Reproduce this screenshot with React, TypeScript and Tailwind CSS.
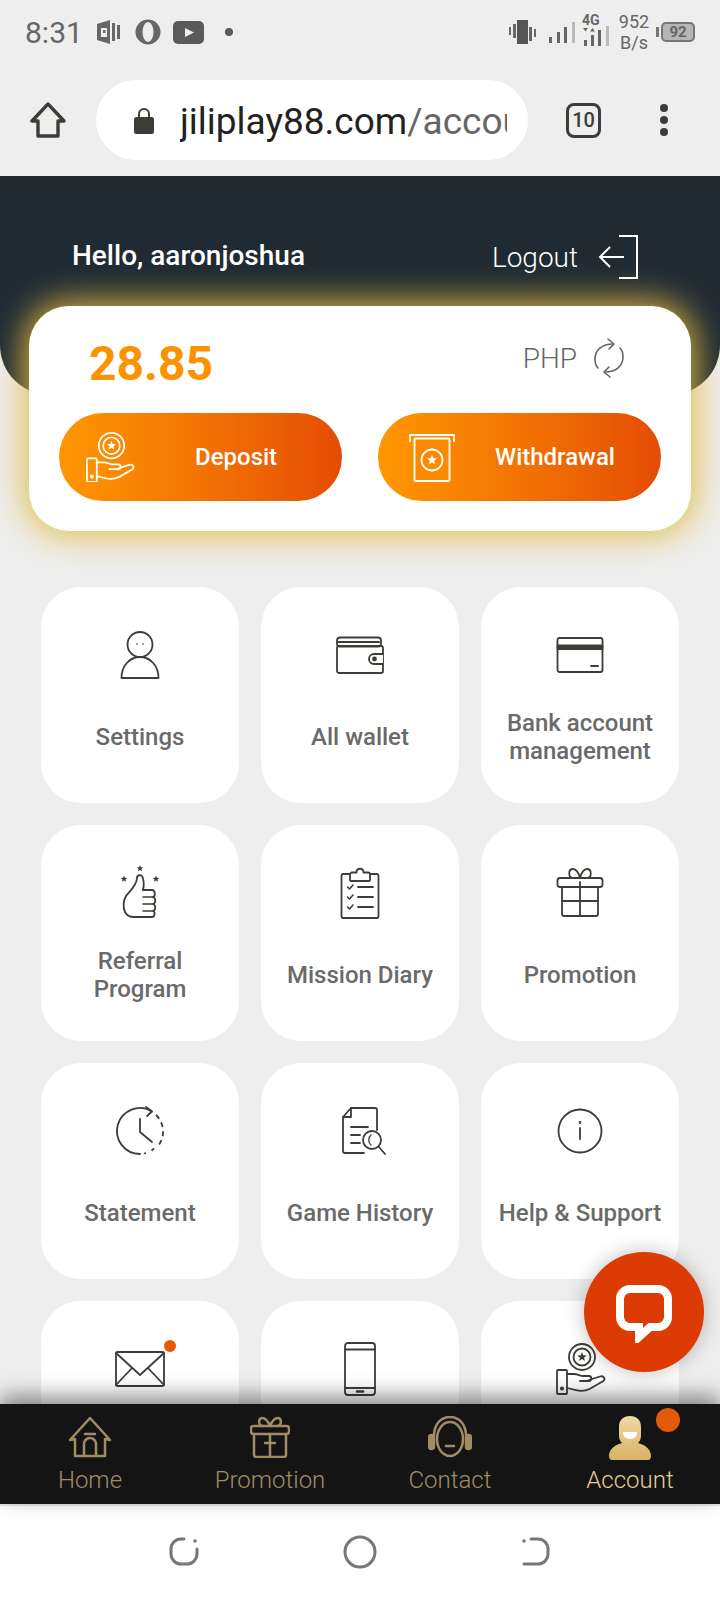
import type { ReactNode } from "react";

function Svg({ children, w = 60, h = 60, sw = 1.8 }: { children: ReactNode; w?: number; h?: number; sw?: number }) {
  return (
    <svg width={w} height={h} viewBox={`0 0 ${w} ${h}`} fill="none" stroke="currentColor" strokeWidth={sw} strokeLinecap="round" strokeLinejoin="round">
      {children}
    </svg>
  );
}

const starPath = (cx: number, cy: number, r: number) => {
  const pts: string[] = [];
  for (let i = 0; i < 10; i++) {
    const rad = i % 2 === 0 ? r : r * 0.42;
    const a = (Math.PI / 5) * i - Math.PI / 2;
    pts.push(`${(cx + rad * Math.cos(a)).toFixed(2)},${(cy + rad * Math.sin(a)).toFixed(2)}`);
  }
  return `M${pts.join("L")}Z`;
};

function HandCoin({ size = 50 }: { size?: number }) {
  return (
    <svg width={size} height={size * 1.04} viewBox="0 0 50 52" fill="none" stroke="currentColor" strokeWidth="1.8" strokeLinecap="round" strokeLinejoin="round">
      <circle cx="26" cy="14" r="13" />
      <circle cx="26" cy="14" r="8.5" />
      <path d={starPath(26, 14, 5)} fill="currentColor" stroke="none" />
      <rect x="1" y="27" width="10" height="24" rx="1" />
      <circle cx="6" cy="45.5" r="1.2" fill="currentColor" />
      <path d="M11 31h7c4 0 6 2 9 2h6c3 0 3 5 0 5h-9" />
      <path d="M33 37l11-3.5c4-1.2 6 2.8 3 4.8l-13 7.5c-5 2.6-9 2.6-14 1.4l-9-2.2" />
    </svg>
  );
}

function WithdrawIcon() {
  return (
    <svg width="46" height="49" viewBox="0 0 46 49" fill="none" stroke="currentColor" strokeWidth="1.8" strokeLinejoin="round">
      <path d="M1 9V2h44v7" />
      <rect x="5.5" y="5.5" width="35" height="42.5" rx="1" fill="#fb8a00" />
      <circle cx="23" cy="27" r="10.5" />
      <path d={starPath(23, 27, 5.5)} fill="currentColor" stroke="none" />
    </svg>
  );
}

const icons: Record<string, ReactNode> = {
  settings: (
    <Svg>
      <ellipse cx="30" cy="17.5" rx="12.5" ry="12.5" />
      <path d="M11.5 51c0-12 8-21 18.500-21s18.500 9 18.500 21z" />
      <circle cx="27" cy="17" r=".2" fill="currentColor" />
      <circle cx="33" cy="17" r=".2" fill="currentColor" />
    </Svg>
  ),
  wallet: (
    <Svg>
      <rect x="7" y="19" width="46" height="27" rx="2" />
      <rect x="7" y="10.500" width="44" height="9" rx="3" />
      <path d="M8 15h41" />
      <path d="M53 27H44a5 5 0 0 0 0 10h9" fill="#fff" />
      <circle cx="44.500" cy="32" r="1.500" fill="currentColor" />
    </Svg>
  ),
  card: (
    <Svg>
      <rect x="7.500" y="11" width="45" height="34" rx="2" />
      <rect x="7.500" y="18.500" width="45" height="3.500" fill="currentColor" />
      <path d="M41 39h7" />
    </Svg>
  ),
  referral: (
    <Svg>
      <path d={starPath(30, 3.500, 3.500)} fill="currentColor" stroke="none" />
      <path d={starPath(14, 14, 3.500)} fill="currentColor" stroke="none" />
      <path d={starPath(46, 14, 3.500)} fill="currentColor" stroke="none" />
      <path d="M23 52h19c3 0 3.500-5 1-6 3-1 3-6 0-7 3-1 3-6 0-7 3-1 2-7-1-7H33c1-4 1-9-.5-13-1.500-3-5.500-2-5.500 1 0 7-7 13-11 18-3 5-3 12-1 16 1.500 3 4 5 9 5z" />
      <path d="M33 25h9M33 32h10M33 39h10M33 46h10" strokeWidth="1.600" />
    </Svg>
  ),
  mission: (
    <Svg>
      <rect x="11.500" y="9" width="37" height="44" rx="2" />
      <path d="M20 15V9.500c0-1 1-2 2-2h4.500c0-5 7-5 7 0H38c1 0 2 1 2 2V15c0 .500-.5 1-1 1H21c-.5 0-1-.5-1-1z" fill="#fff" />
      <path d="M17.500 22l2 2 3.500-4M17.500 32l2 2 3.500-4M17.500 42l2 2 3.500-4" strokeWidth="1.600" />
      <path d="M28 22h15M28 32h15M28 42h15" />
    </Svg>
  ),
  gift: (
    <Svg>
      <rect x="7.500" y="13" width="45" height="9" rx="2.500" />
      <path d="M12 22v27c0 1 1 2 2 2h32c1 0 2-1 2-2V22" />
      <path d="M30 17v34M12 36h36" />
      <path d="M30 13c-1-5-4-9-7-9-5 0-5 9 0 9M30 13c1-5 4-9 7-9 5 0 5 9 0 9" />
    </Svg>
  ),
  statement: (
    <Svg>
      <path d="M42 8.400A23 23 0 1 0 30 51" />
      <path d="M46 12a23 23 0 0 1 2 31M44 45.500l-2.500 2M36 50l-2 .5" strokeDasharray="5 4" strokeLinecap="butt" />
      <path d="M36 4l6 4.500-5 4.500" />
      <path d="M30 16v13l12 10" />
    </Svg>
  ),
  history: (
    <Svg>
      <path d="M34 50H15c-1 0-2-1-2-2V14l8-9h24c1 0 2 1 2 2v20" />
      <path d="M21 5v9h-8" />
      <path d="M21 24h17M21 32h9M21 40h9" />
      <circle cx="42" cy="37" r="9" />
      <path d="M41 32a5 6 0 0 0 0 10" strokeWidth="1.300" />
      <path d="M49 44l6 7" />
    </Svg>
  ),
  help: (
    <Svg>
      <circle cx="30" cy="28" r="21.500" />
      <path d="M30 25v11" />
      <circle cx="30" cy="19.500" r=".5" fill="currentColor" />
    </Svg>
  ),
  mail: (
    <Svg>
      <rect x="6" y="11" width="48" height="34" rx="1.500" />
      <path d="M6 12l24 22 24-22M6 44l16-17M54 44L38 27" />
    </Svg>
  ),
  phone: (
    <Svg>
      <rect x="15" y="2" width="30" height="52" rx="3" />
      <path d="M15 8.500h30M15 47h30" />
      <path d="M27 50.500h6" strokeWidth="2.500" />
    </Svg>
  ),
  coin: (
    <div className="ml-[6px] mt-[2px]">
      <HandCoin size={50} />
    </div>
  ),
};

const tiles: { key: string; label?: string[]; badge?: boolean }[] = [
  { key: "settings", label: ["Settings"] },
  { key: "wallet", label: ["All wallet"] },
  { key: "card", label: ["Bank account", "management"] },
  { key: "referral", label: ["Referral", "Program"] },
  { key: "mission", label: ["Mission Diary"] },
  { key: "gift", label: ["Promotion"] },
  { key: "statement", label: ["Statement"] },
  { key: "history", label: ["Game History"] },
  { key: "help", label: ["Help & Support"] },
  // last row runs under the nav, its labels are not on screen
  { key: "mail", badge: true },
  { key: "phone" },
  { key: "coin" },
];

function Tile({ t }: { t: (typeof tiles)[number] }) {
  return (
    <div className="flex h-[216px] flex-col items-center rounded-[40px] bg-white pt-[40px]">
      <div className="relative h-[60px] w-[60px] text-[#3d3c36]">
        {icons[t.key]}
        {t.badge && <span className="absolute right-[-6px] top-[-1px] h-[12px] w-[12px] rounded-full bg-[#e85a00]" />}
      </div>
      <div className="mt-[22px] flex h-[56px] flex-col items-center justify-center text-center text-[24px] font-medium leading-[28px] text-[#6a6a6a]">
        {t.label?.map((l) => (
          <span key={l}>{l}</span>
        ))}
      </div>
    </div>
  );
}

function NavItem({ label, active, children }: { label: string; active?: boolean; children: ReactNode }) {
  return (
    <div className={`relative flex flex-col items-center pt-[12px] ${active ? "text-[#e6cd96]" : "text-[#a08d63]"}`}>
      <div className="h-[44px]">{children}</div>
      <span className="mt-[2px] text-[24px] font-light leading-[36px]">{label}</span>
    </div>
  );
}

function StatusBar() {
  return (
    <div className="flex h-[70px] items-center pl-[25px] pr-[25px] text-[#666666]">
      <span className="mb-[4px] text-[30px] leading-none">8:31</span>
      <svg className="ml-[14px] mb-[6px]" width="24" height="24" viewBox="0 0 24 24" fill="currentColor">
        <path d="M0 4l13-4v24L0 20z" />
        <rect x="4" y="8" width="6" height="9" fill="#eeeeee" />
        <rect x="6" y="10" width="2.500" height="3" />
        <rect x="15" y="3" width="3" height="18" />
        <rect x="20" y="5" width="3" height="14" />
      </svg>
      <svg className="ml-[14px] mb-[6px]" width="26" height="26" viewBox="0 0 26 26">
        <circle cx="13" cy="13" r="12.500" fill="currentColor" />
        <ellipse cx="13" cy="13" rx="5.500" ry="10" fill="#eeeeee" />
      </svg>
      <svg className="ml-[12px] mb-[6px]" width="31" height="23" viewBox="0 0 31 23">
        <rect width="31" height="23" rx="5" fill="#5a5a5a" />
        <path d="M12 7l9 4.500-9 4.500z" fill="#eeeeee" />
      </svg>
      <span className="ml-[21px] mb-[6px] h-[8px] w-[8px] rounded-full bg-[#5a5a5a]" />

      <div className="ml-auto mb-[6px] flex items-center">
        <svg width="28" height="24" viewBox="0 0 28 24" fill="currentColor">
          <rect x="0" y="7" width="2" height="8" />
          <rect x="4" y="4" width="3" height="14" />
          <rect x="8" y="0" width="11" height="24" fill="#555555" />
          <rect x="20" y="7" width="3" height="14" />
          <rect x="25" y="9" width="2" height="8" />
        </svg>
        <svg className="ml-[12px]" width="30" height="24" viewBox="0 0 30 24" fill="currentColor">
          <rect x="0" y="17" width="3" height="6" />
          <rect x="8" y="12" width="3" height="11" />
          <rect x="15" y="7" width="3" height="16" />
          <rect x="23" y="2" width="3" height="21" fill="#bbbbbb" />
        </svg>
        <div className="relative ml-[3px] h-[34px] w-[30px]">
          <span className="absolute left-0 top-[-3px] text-[14px] font-bold leading-[16px]">4G</span>
          <svg className="absolute left-0 top-[11px]" width="30" height="23" viewBox="0 0 30 23" fill="currentColor">
            <path d="M1 2h5l-2.500 3.500zM8 5.500h5L10.500 2z" />
            <rect x="2" y="14" width="3" height="6" />
            <rect x="9" y="9" width="3" height="11" />
            <rect x="16" y="4" width="3" height="16" />
            <rect x="24" y="-1" width="3" height="21" fill="#bbbbbb" />
          </svg>
        </div>
        <div className="ml-[6px] flex w-[32px] flex-col items-center text-[18px] leading-[21px]">
          <span>952</span>
          <span>B/s</span>
        </div>
        <div className="ml-[6px] flex items-center">
          <span className="h-[10px] w-[3px] bg-[#777777]" />
          <div className="ml-[2px] flex h-[20px] w-[34px] items-center justify-center rounded-[5px] border-2 border-[#777777] bg-[#b5b5b5] text-[15px] font-bold leading-none">
            92
          </div>
        </div>
      </div>
    </div>
  );
}

function UrlBar() {
  return (
    <div className="flex h-[106px] items-center pb-[6px] pl-[30px]">
      <svg width="36" height="36" viewBox="0 0 36 36" fill="none" stroke="#3d3c36" strokeWidth="3.400" strokeLinejoin="round">
        <path d="M18 2L2 19h6v15h20V19h6z" />
      </svg>
      <div className="ml-[30px] flex h-[80px] w-[432px] items-center rounded-[40px] bg-white pl-[38px]">
        <svg width="20" height="27" viewBox="0 0 20 27" fill="#3d3c36">
          <path d="M5 11V7a5 5 0 0 1 10 0v4" fill="none" stroke="#3d3c36" strokeWidth="2" />
          <rect x="0" y="10" width="20" height="17" rx="2.500" />
        </svg>
        <div className="ml-[26px] mt-[4px] w-[327px] overflow-hidden whitespace-nowrap text-[37px] leading-[44px] text-[#222222]">
          jiliplay88.com<span className="text-[#666666]">/account</span>
        </div>
      </div>
      <div className="ml-[38px] flex h-[35px] w-[35px] items-center justify-center rounded-[8px] border-[3.500px] border-[#3d3c36] text-[20px] font-medium leading-none text-[#3d3c36]">
        10
      </div>
      <div className="ml-[59px] flex flex-col gap-[4px]">
        <span className="h-[8px] w-[8px] rounded-full bg-[#3d3c36]" />
        <span className="h-[8px] w-[8px] rounded-full bg-[#3d3c36]" />
        <span className="h-[8px] w-[8px] rounded-full bg-[#3d3c36]" />
      </div>
    </div>
  );
}

export default function App() {
  return (
    <div className="relative flex h-[1600px] w-[720px] flex-col overflow-hidden bg-[#eeeeee] font-[Roboto,sans-serif]">
      <StatusBar />
      <UrlBar />

      <main className="relative flex-1 overflow-hidden">
        <header className="flex h-[219px] items-start justify-between rounded-b-[50px] bg-[#1f2a33] pl-[72px] pr-[82px] pt-[58px] text-white">
          <span className="text-[28px] font-medium leading-[44px]">Hello, aaronjoshua</span>
          <div className="flex items-center">
            <span className="mt-[2px] text-[28px] font-light leading-[44px]">Logout</span>
            <svg className="ml-[20px]" width="40" height="44" viewBox="0 0 40 44" fill="none" stroke="#fff" strokeWidth="2">
              <path d="M21 1h18v42H21" />
              <path d="M26 22H2M12 12L2 22l10 10" />
            </svg>
          </div>
        </header>

        {/* balance card */}
        <section className="relative mx-[29px] mt-[-89px] h-[225px] rounded-[40px] bg-white px-[30px] shadow-[0_0_34px_4px_#e0bb45]">
          <div className="flex h-[107px] justify-between">
            <span className="ml-[30px] mt-[32px] text-[48px] font-bold leading-[52px] text-[#fb9200]">28.85</span>
            <div className="mr-[36px] mt-[32px] flex h-[42px] items-center">
              <span className="ml-[1px] text-[28px] font-light leading-none text-[#666666]">PHP</span>
              <svg className="ml-[16px] mt-[-2px]" width="32" height="40" viewBox="0 0 32 40" fill="none" stroke="#666666" strokeWidth="1.600" strokeLinecap="round" strokeLinejoin="round">
                <path d="M20 6C9 6 2 12 2 21c0 4 1 7 3 9" />
                <path d="M15 1l6 5-5 5" />
                <path d="M12 34c11 0 18-6 18-15 0-4-1-7-3-9" />
                <path d="M17 39l-6-5 5-5" />
              </svg>
            </div>
          </div>
          <div className="flex gap-[36px]">
            <button className="flex h-[88px] w-[283px] items-center rounded-[44px] bg-linear-to-r from-[#ff9700] to-[#e44c05] pl-[27px] text-white">
              <HandCoin size={49} />
              <span className="ml-[60px] text-[24px] font-medium">Deposit</span>
            </button>
            <button className="flex h-[88px] w-[283px] items-center rounded-[44px] bg-linear-to-r from-[#ff9700] to-[#e44c05] pl-[31px] text-white">
              <WithdrawIcon />
              <span className="ml-[40px] text-[24px] font-medium">Withdrawal</span>
            </button>
          </div>
        </section>

        <section className="mt-[56px] grid grid-cols-3 gap-[22px] px-[41px]">
          {tiles.map((t) => (
            <Tile key={t.key} t={t} />
          ))}
        </section>

        {/* live chat bubble */}
        <button className="absolute bottom-[32px] right-[16px] z-20 flex h-[120px] w-[120px] items-center justify-center rounded-full bg-[#dc3b03] shadow-[0_0_20px_rgba(0,0,0,0.25)]">
          <svg width="60" height="62" viewBox="0 0 60 62" fill="none" stroke="#fff" strokeWidth="8" strokeLinejoin="miter">
            <path d="M16 8h28a10 10 0 0 1 10 10v18a10 10 0 0 1-10 10h-8l-11 10v-10h-9a10 10 0 0 1-10-10V18A10 10 0 0 1 16 8z" />
          </svg>
        </button>
      </main>

      <nav className="relative z-10 grid h-[100px] grid-cols-4 bg-[#141414] shadow-[0_-8px_20px_rgba(0,0,0,0.45)]">
        <NavItem label="Home">
          <svg width="44" height="42" viewBox="0 0 44 42" fill="none" stroke="currentColor" strokeWidth="2.500" strokeLinejoin="round" strokeLinecap="round">
            <path d="M2 24L22 2l20 22-5-1v17H7V23z" />
            <path d="M16 40V28a6 6 0 0 1 12 0v12" />
            <path d="M17 18h10" />
          </svg>
        </NavItem>
        <NavItem label="Promotion">
          <svg width="40" height="42" viewBox="0 0 40 42" fill="none" stroke="currentColor" strokeWidth="2.500" strokeLinejoin="round" strokeLinecap="round">
            <rect x="1" y="10" width="38" height="8" rx="2.500" />
            <path d="M4 18v21c0 1 1 2 2 2h28c1 0 2-1 2-2V18" />
            <path d="M20 18v23M15 27h10" />
            <path d="M20 10c-2-5-5-8-8-8-4 0-4 8 1 8M20 10c2-5 5-8 8-8 4 0 4 8-1 8" />
          </svg>
        </NavItem>
        <NavItem label="Contact">
          <svg width="44" height="42" viewBox="0 0 44 42" fill="none" stroke="currentColor" strokeWidth="2.500" strokeLinecap="round">
            <path d="M6 20C6 8 13 1 22 1s16 7 16 19" />
            <ellipse cx="22" cy="23" rx="13" ry="17" />
            <rect x="1" y="19" width="5" height="14" rx="2.500" fill="currentColor" />
            <rect x="38" y="19" width="5" height="14" rx="2.500" fill="currentColor" />
            <path d="M18 30h8" />
          </svg>
        </NavItem>
        <NavItem label="Account" active>
          <svg width="42" height="44" viewBox="0 0 42 44">
            <defs>
              <linearGradient id="acc" x1="0" y1="0" x2="0" y2="1">
                <stop offset="0" stopColor="#f0d9a5" />
                <stop offset="1" stopColor="#d9b266" />
              </linearGradient>
            </defs>
            <path d="M21 0c7 0 11 4 11 11v8c0 4-1 6-3 8 8 2 13 7 13 13 0 2-1 4-3 4H3c-2 0-3-2-3-4 0-6 5-11 13-13-2-2-3-4-3-8v-8C10 4 14 0 21 0z" fill="url(#acc)" />
            <path d="M14 16h14c0 5-3 7-7 7s-7-2-7-7z" fill="#fff" />
          </svg>
          <span className="absolute left-[116px] top-[4px] h-[24px] w-[24px] rounded-full bg-[#e05a0a]" />
        </NavItem>
      </nav>

      <footer className="flex h-[96px] items-start justify-center border-t-2 border-[#e6e6e6] bg-white pt-[31px] text-[#777777]">
        <svg width="30" height="30" viewBox="0 0 30 30" fill="none" stroke="currentColor" strokeWidth="3" strokeLinecap="round">
          <path d="M15 2h-3A10 10 0 0 0 2 12v5a10 10 0 0 0 10 10h6a10 10 0 0 0 10-10v-5" />
          <circle cx="26" cy="4" r="1.800" fill="currentColor" stroke="none" />
        </svg>
        <svg className="ml-[144px] mt-[-2px]" width="34" height="34" viewBox="0 0 34 34" fill="none" stroke="currentColor" strokeWidth="3">
          <circle cx="17" cy="17" r="15" />
        </svg>
        <svg className="ml-[144px]" width="30" height="30" viewBox="0 0 30 30" fill="none" stroke="currentColor" strokeWidth="3" strokeLinecap="round">
          <path d="M10 2h7a10 10 0 0 1 10 10v5a10 10 0 0 1-10 10H3" />
          <circle cx="3" cy="4" r="1.800" fill="currentColor" stroke="none" />
        </svg>
      </footer>
    </div>
  );
}
